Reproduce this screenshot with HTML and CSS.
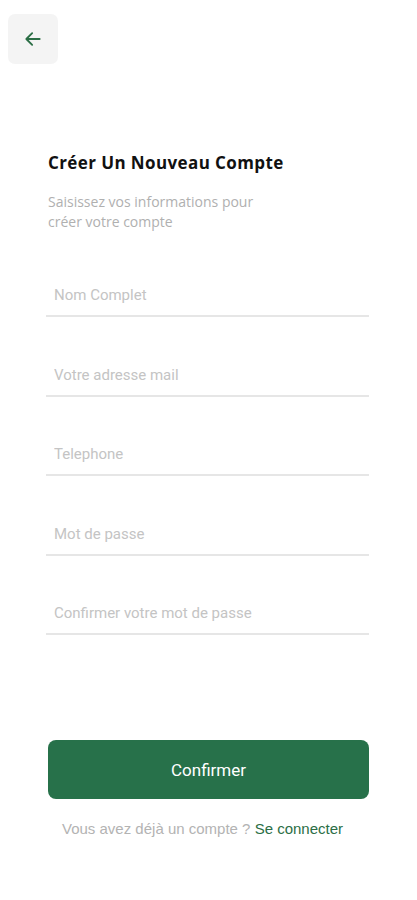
FILE: index.html
```html
<!DOCTYPE html>
<html lang="fr">
<head>
    <meta charset="UTF-8">
    <meta name="viewport" content="width=device-width, initial-scale=1.0">
    <title>Créer un compte</title>
    <link rel="stylesheet" href="styles.css">
</head>
<body>
    <div class="screen">
        <!-- retour -->
        <button class="back-btn" aria-label="Retour">
            <svg width="20" height="20" viewBox="0 0 24 24" fill="none" stroke="#2b6e45" stroke-width="2.2" stroke-linecap="round" stroke-linejoin="round">
                <path d="M20 12H5"/>
                <path d="M11 5l-7 7 7 7"/>
            </svg>
        </button>

        <div class="header">
            <h2 class="title">Créer Un Nouveau Compte</h2>
            <p class="subtitle">Saisissez vos informations pour<br>créer votre compte</p>
        </div>

        <!-- formulaire -->
        <form class="form">
            <input type="text" class="field" placeholder="Nom Complet">
            <input type="email" class="field" placeholder="Votre adresse mail">
            <input type="tel" class="field" placeholder="Telephone">
            <input type="password" class="field" placeholder="Mot de passe">
            <input type="password" class="field" placeholder="Confirmer votre mot de passe">
        </form>

        <button class="confirm-btn">Confirmer</button>
        <p class="login-link">Vous avez déjà un compte ? <a href="#">Se connecter</a></p>
    </div>
</body>
</html>
```

FILE: styles.css
```css
body {
    margin: 0;
    background-color: white;
    font-family: Roboto, "Liberation Sans", sans-serif;
}
.screen {
    width: 417px;
    height: 900px;
    box-sizing: border-box;
    padding: 14px 48px 0 48px;
    display: flex;
    flex-direction: column;
}
.back-btn {
    width: 50px;
    height: 50px;
    margin-left: -40px;
    border: none;
    border-radius: 7px;
    background-color: #f4f4f4;
    display: flex;
    align-items: center;
    justify-content: center;
    padding: 0;
    cursor: pointer;
}
.header {
    margin-top: 88px;
}
.title {
    margin: 0;
    font-family: "Open Sans", sans-serif;
    font-weight: 700;
    font-size: 17px;
    letter-spacing: 0.4px;
    color: #111;
    line-height: 22px;
}
.subtitle {
    margin: 18px 0 0 0;
    font-family: "Open Sans", sans-serif;
    font-size: 14px;
    line-height: 20px;
    color: #b0b0b0;
}
.form {
    margin-top: 28px;
    margin-left: -2px;
    display: flex;
    flex-direction: column;
    gap: 22.5px;
}
.field {
    box-sizing: border-box;
    height: 57px;
    border: none;
    border-bottom: 2px solid #e6e6e6;
    padding: 20px 8px 5px 8px;
    font-family: Roboto, sans-serif;
    font-size: 15px;
    color: #333;
    background: transparent;
    outline: none;
}
.field::placeholder {
    color: #c4c4c4;
}
.confirm-btn {
    margin-top: 105px;
    height: 59px;
    border: none;
    border-radius: 8px;
    background-color: #27714a;
    color: white;
    font-family: Roboto, sans-serif;
    font-size: 17px;
    cursor: pointer;
}
.login-link {
    margin: 21px 12px 0 0;
    text-align: center;
    font-family: "Liberation Sans", Arial, sans-serif;
    font-size: 15px;
    line-height: 18px;
    color: #b3b3b3;
}
.login-link a {
    color: #2b6e45;
    text-decoration: none;
}
```
